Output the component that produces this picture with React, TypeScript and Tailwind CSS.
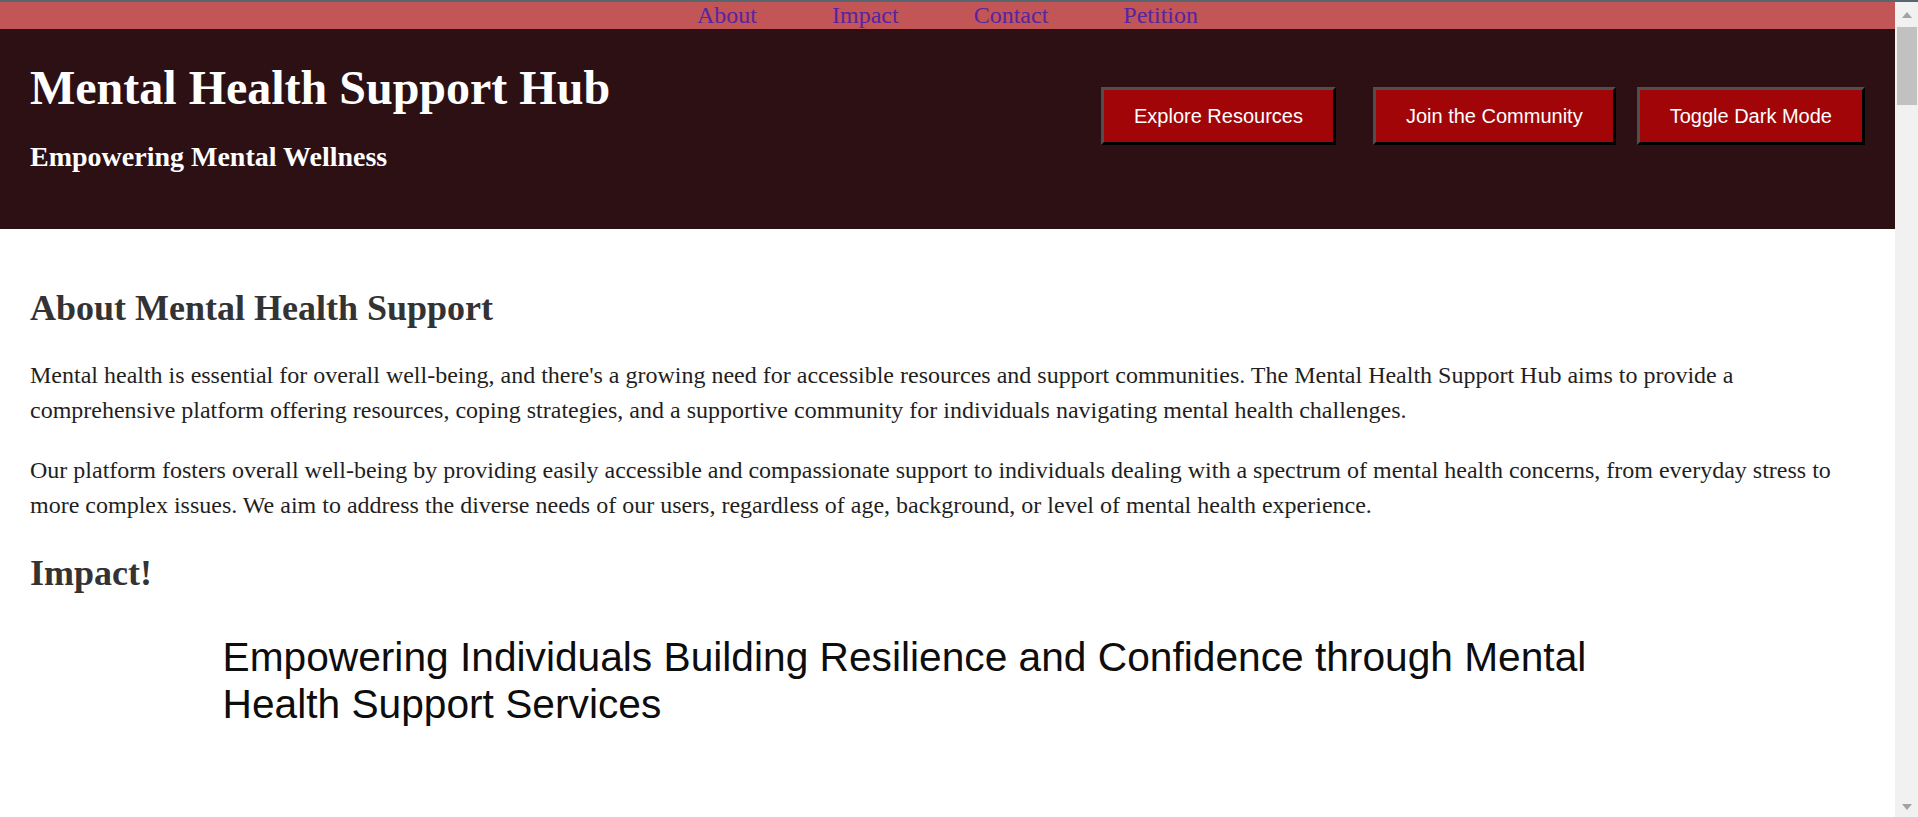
import React from 'react';

const serif = "font-['Liberation_Serif','Times_New_Roman',serif]";
const sans = "font-['Liberation_Sans',Arial,sans-serif]";

const navLinks = ['About', 'Impact', 'Contact', 'Petition'];
const actions = [
  { label: 'Explore Resources', gap: 'mr-[37px]' },
  { label: 'Join the Community', gap: 'mr-[21px]' },
  { label: 'Toggle Dark Mode', gap: '' },
];

const Scrollbar: React.FC = () => (
  <div className="flex w-[23px] shrink-0 flex-col items-center bg-[#f1f1f1]">
    <div className="flex h-[25px] w-full items-center justify-center">
      <div className="h-0 w-0 border-x-[5px] border-b-[6px] border-x-transparent border-b-[#a3a3a3]" />
    </div>
    <div className="h-[78px] w-[20px] bg-[#c1c1c1]" />
    <div className="flex-1" />
    <div className="flex h-[20px] w-full items-center justify-center">
      <div className="h-0 w-0 border-x-[5px] border-t-[6px] border-x-transparent border-t-[#a3a3a3]" />
    </div>
  </div>
);

export default function App() {
  return (
    <div className={`flex h-[817px] w-full flex-col overflow-hidden bg-white ${serif}`}>
      <div className="h-[2px] w-full shrink-0 bg-[#57666f]" />
      <div className="flex min-h-0 flex-1">
        <div className="min-w-0 flex-1">
          <nav className="flex h-[27px] justify-center gap-[75px] bg-[#c25555]">
            {navLinks.map((l) => (
              <a key={l} href={`#${l.toLowerCase()}`} className="text-[24px] leading-[27px] text-[#5724a3]">
                {l}
              </a>
            ))}
          </nav>

          <header className="flex h-[200px] items-start justify-between bg-[#2c1013] px-[30px]">
            <div className="pt-[31px] text-white">
              <h1 className="text-[48px] font-bold leading-[56px]">Mental Health Support Hub</h1>
              <h3 className="mt-[25px] text-[28px] font-bold leading-[32px]">Empowering Mental Wellness</h3>
            </div>
            <div className="mt-[58px] flex">
              {actions.map((a) => (
                <button
                  key={a.label}
                  className={`${a.gap} border-[3px] border-t-[#4f4f4f] border-l-[#4f4f4f] border-b-black border-r-black bg-[#a10508] px-[30px] py-[15px] text-[20px] leading-[22px] text-white ${sans}`}
                >
                  {a.label}
                </button>
              ))}
            </div>
          </header>

          <main className="px-[30px]">
            <h2 className="mt-[58px] text-[36px] font-bold leading-[42px] text-[#333]">About Mental Health Support</h2>
            <p className="mt-[29px] text-[24px] leading-[35.3px] text-[#1f1f1f]">
              Mental health is essential for overall well-being, and there's a growing need for accessible resources and
              support communities. The Mental Health Support Hub aims to provide a comprehensive platform offering
              resources, coping strategies, and a supportive community for individuals navigating mental health
              challenges.
            </p>
            <p className="mt-[24.5px] text-[24px] leading-[35.3px] text-[#1f1f1f]">
              Our platform fosters overall well-being by providing easily accessible and compassionate support to
              individuals dealing with a spectrum of mental health concerns, from everyday stress to more complex issues.
              We aim to address the diverse needs of our users, regardless of age, background, or level of mental health
              experience.
            </p>
            <h2 className="mt-[28px] text-[36px] font-bold leading-[42px] text-[#333]">Impact!</h2>
            <div className="mx-auto mt-[40.5px] w-[1450px]">
              <p className={`text-[40.7px] leading-[46.5px] text-[#0d0d0d] ${sans}`}>
                Empowering Individuals Building Resilience and Confidence through Mental Health Support Services
              </p>
            </div>
          </main>
        </div>
        <Scrollbar />
      </div>
    </div>
  );
}
